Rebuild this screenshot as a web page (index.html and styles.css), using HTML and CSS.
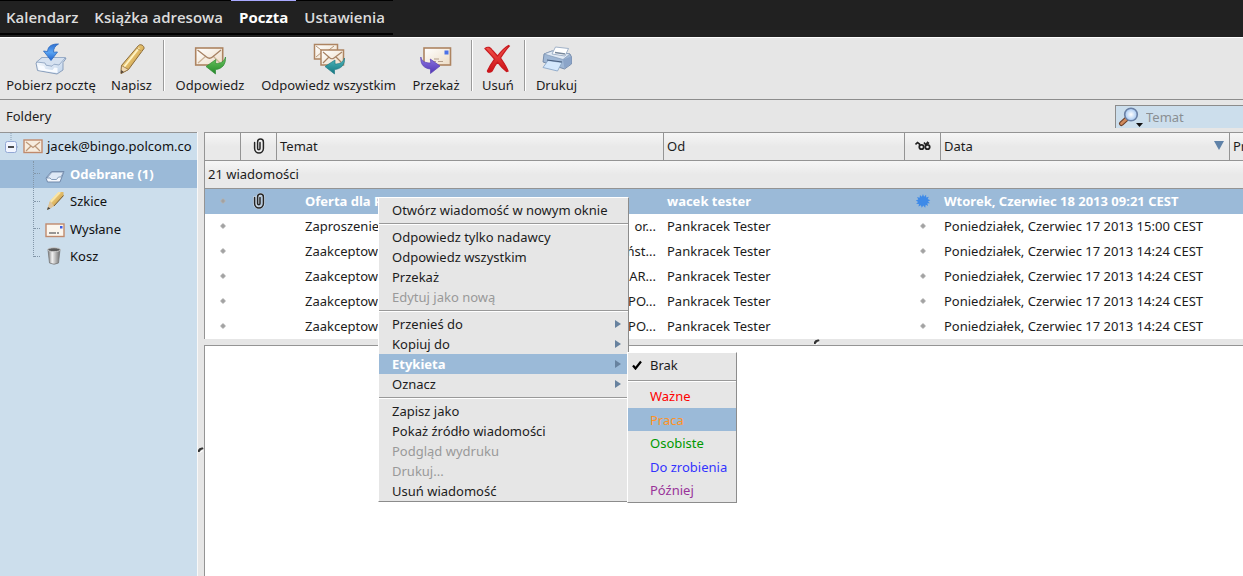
FILE: index.html
```html
<!DOCTYPE html>
<html lang="pl">
<head>
<meta charset="utf-8">
<title>Poczta</title>
<link rel="stylesheet" href="styles.css">
</head>
<body>
<svg class="defs" aria-hidden="true">
  <defs>
    <linearGradient id="gBlue" x1="0" y1="0" x2="0" y2="1"><stop offset="0" stop-color="#2f6fd0"/><stop offset=".5" stop-color="#58a4f4"/><stop offset="1" stop-color="#1f62cc"/></linearGradient>
    <linearGradient id="gTray" x1="0" y1="0" x2="1" y2="1"><stop offset="0" stop-color="#ffffff"/><stop offset="1" stop-color="#b9cfe9"/></linearGradient>
    <linearGradient id="gPencil" x1="0" y1="0" x2="1" y2="1"><stop offset="0" stop-color="#f6e6a6"/><stop offset=".5" stop-color="#e0ba66"/><stop offset="1" stop-color="#a97a33"/></linearGradient>
    <linearGradient id="gPaper" x1="0" y1="0" x2="1" y2="1"><stop offset="0" stop-color="#ffffff"/><stop offset="1" stop-color="#ecdcc6"/></linearGradient>
    <linearGradient id="gGreen" x1="0" y1="0" x2="0" y2="1"><stop offset="0" stop-color="#6cc860"/><stop offset="1" stop-color="#23882a"/></linearGradient>
    <linearGradient id="gTeal" x1="0" y1="0" x2="0" y2="1"><stop offset="0" stop-color="#4fb9bd"/><stop offset="1" stop-color="#147680"/></linearGradient>
    <linearGradient id="gViolet" x1="0" y1="0" x2="0" y2="1"><stop offset="0" stop-color="#8f78e4"/><stop offset="1" stop-color="#5136b4"/></linearGradient>
    <linearGradient id="gRed" x1="0" y1="0" x2="0" y2="1"><stop offset="0" stop-color="#f4554c"/><stop offset="1" stop-color="#cc1016"/></linearGradient>
    <linearGradient id="gBin" x1="0" y1="0" x2="1" y2="0"><stop offset="0" stop-color="#777"/><stop offset=".35" stop-color="#f2f2f2"/><stop offset="1" stop-color="#6c6c6c"/></linearGradient>
    <radialGradient id="gLens"><stop offset="0" stop-color="#ffffff"/><stop offset="1" stop-color="#a5c8f2"/></radialGradient>
    <symbol id="clip" viewBox="0 0 14 18"><path d="M8 5.500v6a1.200 1.200 0 0 1-2.400 0V5a2.900 2.900 0 0 1 5.800 0v6.500a4.400 4.400 0 0 1-8.800 0V5.500" fill="none" stroke="#f4f4f4" stroke-width="2.800" stroke-linecap="round" opacity=".6"/><path d="M8 5.500v6a1.200 1.200 0 0 1-2.400 0V5a2.900 2.900 0 0 1 5.800 0v6.500a4.400 4.400 0 0 1-8.800 0V5.500" fill="none" stroke="#252525" stroke-width="1.500" stroke-linecap="round"/></symbol>
    <symbol id="dot" viewBox="0 0 8 8"><path d="M4 1l3 3-3 3-3-3z" fill="#b4b4b4"/><circle cx="4" cy="4" r="1.700" fill="#a2a2a2"/></symbol>
    <symbol id="arrow" viewBox="0 0 6 10"><path d="M0 1l6 4-6 4z" fill="#67829f"/></symbol>
  </defs>
</svg>

<nav class="tabs">
  <a class="tab" href="#">Kalendarz</a>
  <a class="tab" href="#">Książka adresowa</a>
  <a class="tab tab-active" href="#">Poczta</a>
  <a class="tab" href="#">Ustawienia</a>
</nav>

<div class="toolbar">
  <div class="tool-group">
    <button class="tool tool-fetch" type="button">
      <svg class="tool-icon" viewBox="0 0 32 32"><path d="M1 20l6-5.500 24 1-3 4v7.500l-6 4-19.500-3.500z" fill="url(#gTray)" stroke="#8a9fbc" stroke-width="1"/><path d="M7 14.500h23.500L24 22l-5-.8-2 2-6-1-1-2.200-8.500-1z" fill="#d5e1f0" stroke="#91a6c3" stroke-width=".9"/><path d="M3 22l6 1 1.500 3 7 1 2-2.500 3 .5v5L3.500 27z" fill="#f8fbff"/><path d="M23.500 1C17 .8 13 3 12.500 8.500L8.500 8l7.500 9.500L22.500 9l-4 .2C18.500 5.500 20 3 23.500 1z" fill="url(#gBlue)" stroke="#2c68bd" stroke-width=".8"/></svg>
      <span>Pobierz pocztę</span>
    </button>
    <button class="tool tool-small" type="button">
      <svg class="tool-icon" viewBox="0 0 32 32"><path d="M22.500 2.500c2-2 6 .2 5.500 3L12.500 26.500 5 30.500l.5-8z" fill="url(#gPencil)" stroke="#8b6a38" stroke-width="1"/><path d="M23 5L8 24" stroke="#fff3c4" stroke-width="2"/><path d="M5.500 22.500l7 4L5 30.500z" fill="#efd9b4" stroke="#8b6a38" stroke-width=".7"/><path d="M5.300 27l2.500 2-2.800 1.500z" fill="#4d4038"/><path d="M20.500 5l5.500 3.500" stroke="#c09a56"/></svg>
      <span>Napisz</span>
    </button>
  </div>
  <div class="tool-group">
    <button class="tool tool-reply" type="button">
      <svg class="tool-icon" viewBox="0 0 32 32"><rect x="1.700" y="5" width="27" height="17" fill="url(#gPaper)" stroke="#ad8461" stroke-width="1.600"/><path d="M4 20l8-7M26 20l-7-7" stroke="#cdb397" stroke-width="1.300"/><path d="M3.500 7l9 7q3 2.500 6 0l8.500-7" fill="none" stroke="#a78263" stroke-width="1.300"/><path d="M31.500 14c-1.500 5-5 6.500-10 6.500l.4-4L12 23.500l9.500 7.500v-4.500c6.500-.5 10.500-5 10-12.500z" fill="url(#gGreen)" stroke="#2f8a34" stroke-width=".7"/></svg>
      <span>Odpowiedz</span>
    </button>
    <button class="tool tool-reply-all" type="button">
      <svg class="tool-icon" viewBox="0 0 32 32"><rect x="1.500" y="1.500" width="23" height="14.500" fill="url(#gPaper)" stroke="#ad8461" stroke-width="1.500"/><path d="M3 3l9 7 9-7M3 14l6-5" fill="none" stroke="#b7977a"/><rect x="8" y="7" width="22.500" height="15" fill="url(#gPaper)" stroke="#ad8461" stroke-width="1.500"/><path d="M10 9l7 6q2 1.500 4 0l8-6M10 20l6-6M28 19l-5-5" fill="none" stroke="#a78263" stroke-width="1.200"/><path d="M31.500 15c-1.500 4.500-5 6-9.500 6v-4l-10 6.500 9.500 7.500v-4.500c6-.5 10.500-4 10-11.500z" fill="url(#gTeal)" stroke="#227b86" stroke-width=".7"/></svg>
      <span>Odpowiedz wszystkim</span>
    </button>
    <button class="tool tool-forward" type="button">
      <svg class="tool-icon" viewBox="0 0 32 32"><rect x="4" y="5" width="26.500" height="17" fill="url(#gPaper)" stroke="#ad8461" stroke-width="1.600"/><rect x="24.500" y="7.500" width="4" height="4" fill="#4c72e8"/><path d="M14 16h5M11 18.500h5m2 0h5" stroke="#b49e89" stroke-width="1.200"/><path d="M.8 14c1 4.500 4.500 6 10 6l-.5-4L20 23l-9.500 7.500V26C4.500 25.500.3 22 .8 14z" fill="url(#gViolet)" stroke="#5a40b4" stroke-width=".7"/></svg>
      <span>Przekaż</span>
    </button>
  </div>
  <div class="tool-group">
    <button class="tool" type="button">
      <svg class="tool-icon" viewBox="0 0 32 32"><path d="M3 5.500C6 3 8.500 4.500 10.500 7.500l5 5.500C19 8.500 23 4.500 26.500 2.500l.8.500C23.500 7 21 11 18.500 15c3 4.500 6 8.500 7.500 13l-1.500.5c-4-3-6.500-6-9-9.300-2.500 3-4 6-5.500 9-1.500 1.500-5 1.500-4.500-.5 2-4 4.500-8 7-11.500C9.500 12.500 6 9 3 5.500z" fill="url(#gRed)" stroke="#c81a20" stroke-width="1.200"/></svg>
      <span>Usuń</span>
    </button>
  </div>
  <div class="tool-group">
    <button class="tool tool-small" type="button">
      <svg class="tool-icon" viewBox="0 0 32 32"><path d="M3 11l8-3 18 3 1.500 3v7l-7 5L2 19z" fill="#9fb7d5" stroke="#6f86a6" stroke-width=".9"/><path d="M3 11l8-3 18 3-7 5.500z" fill="#e1eaf5" stroke="#8298b5" stroke-width=".7"/><path d="M11 11l3.500-7 13 1.500L24 13z" fill="#fff" stroke="#8ca1bd" stroke-width=".8"/><path d="M14 9.500l10 1.500" stroke="#76879b" stroke-width="1.500"/><path d="M22 16.500l8.500-3v7l-7 5z" fill="#8ba4c8"/><path d="M7 17.500l14 2-4.500 8.500L2 24.500z" fill="#d4e8fd" stroke="#8ba7c7" stroke-width=".9"/><path d="M6 17l15 2" stroke="#475e7e" stroke-width="1.200"/></svg>
      <span>Drukuj</span>
    </button>
  </div>
</div>

<main class="mail">
  <div class="mail-head">
    <h1 class="title">Foldery</h1>
    <div class="search">
      <svg class="search-icon" viewBox="0 0 26 22"><path d="M9 12.500l-5.500 5" stroke="#6c3f28" stroke-width="5" stroke-linecap="round"/><path d="M8.500 13l-5 4.500" stroke="#d08a5c" stroke-width="2.800" stroke-linecap="round"/><circle cx="13" cy="8.500" r="6.300" fill="url(#gLens)" stroke="#6a80a5" stroke-width="1.600"/><path d="M18 17h7l-3.500 4z" fill="#111"/></svg>
      <input class="search-field" type="text" aria-label="Szukaj" placeholder="Temat">
    </div>
  </div>

  <aside class="folders">
    <ul class="tree">
      <li class="tree-row tree-root">
        <svg class="knob" viewBox="0 0 16 27"><path d="M8 0v8M14 14h4" stroke="#8aa0b6" stroke-dasharray="1 1"/><rect x="2.500" y="8.500" width="11" height="11" rx="2" fill="#f1f5ff" stroke="#93a8d5"/><path d="M5 14h6" stroke="#222" stroke-width="1.600"/></svg>
        <svg class="tree-icon" viewBox="0 0 20 18"><rect x="1" y="3" width="18" height="12.500" fill="#f7eddf" stroke="#c08a6c" stroke-width="1.400"/><path d="M3 5l7 5.500L17 5M3 14l5-5m9 5l-5-5" fill="none" stroke="#bc9879" stroke-width="1.200"/></svg>
        <span>jacek@bingo.polcom.co</span>
      </li>
      <li class="tree-row tree-selected">
        <svg class="tree-icon" viewBox="0 0 20 18"><path d="M1 13l5.500-6.500H19L15 17H2.500z" fill="#f3f7fd" stroke="#7189aa"/><path d="M2 13h3l1.500 1.500h5L13.500 12h2.500l2.500-5H7z" fill="#dfe9f6" stroke="#7c94b3" stroke-width=".9"/></svg>
        <span>Odebrane (1)</span>
      </li>
      <li class="tree-row">
        <svg class="tree-icon" viewBox="0 0 20 18"><path d="M14 0h4.500v4L9 14l-7 4L5 9z" fill="url(#gPencil)"/><path d="M15 0L5.500 10" stroke="#f9e5a6" stroke-width="2.400"/><path d="M5 9l4 5-7 4z" fill="#dfc59c"/><path d="M3 15L5.500 16.500 2 18z" fill="#444"/><path d="M18.500 3.500L9 14" stroke="#76603d"/></svg>
        <span>Szkice</span>
      </li>
      <li class="tree-row">
        <svg class="tree-icon" viewBox="0 0 20 18"><rect x="1" y="4" width="18" height="12.500" fill="#fbf6ee" stroke="#c08a6c" stroke-width="1.400"/><path d="M4 13h7m1 0h2" stroke="#777" stroke-width="1.400"/><rect x="15" y="6" width="2.500" height="2.500" fill="#3c5be0"/></svg>
        <span>Wysłane</span>
      </li>
      <li class="tree-row">
        <svg class="tree-icon" viewBox="0 0 20 18"><path d="M3 2.500L4.500 16q4.500 2.500 9 0L15 2.500z" fill="url(#gBin)" stroke="#777" stroke-width=".8"/><ellipse cx="9" cy="2.700" rx="6.300" ry="2" fill="#5c5c5c" stroke="#c9c9c9"/></svg>
        <span>Kosz</span>
      </li>
    </ul>
  </aside>

  <div class="split-v"><svg class="grip" viewBox="0 0 6 6"><path d="M0 5V3q1-3 5-2.500L5.500 2 3 3 1.500 5z" fill="#333"/><path d="M2 5.500L5 3.500" stroke="#fff"/></svg></div>

  <section class="content">
    <table class="messages">
      <colgroup><col class="c-icon"><col class="c-icon"><col><col class="c-from"><col class="c-icon"><col class="c-date"><col class="c-rest"></colgroup>
      <thead>
        <tr class="head-row">
          <th></th>
          <th class="mid"><svg class="clip"><use href="#clip"/></svg></th>
          <th>Temat</th>
          <th>Od</th>
          <th class="mid"><svg class="glasses" viewBox="0 0 16 10"><path d="M.5 3.500L2.500 1.500 4.500 3 5 6M9 1.500L11 4 12.500 1.500 14 2.500" fill="none" stroke="#222" stroke-width="1.600"/><circle cx="6.500" cy="6" r="2.200" fill="#eee" stroke="#222" stroke-width="1.800"/><circle cx="12.500" cy="6" r="2.200" fill="#eee" stroke="#222" stroke-width="1.800"/></svg></th>
          <th><span class="sorted">Data <svg class="sort" viewBox="0 0 12 9"><path d="M1 0h10L6 9z" fill="#5f82a8"/></svg></span></th>
          <th>Pr</th>
        </tr>
        <tr class="count-row"><th colspan="7">21 wiadomości</th></tr>
      </thead>
      <tbody>
        <tr class="selected">
          <td class="mid"><svg class="dot"><use href="#dot"/></svg></td>
          <td class="mid"><svg class="clip"><use href="#clip"/></svg></td>
          <td><span class="subject">Oferta dla PZFS numer 8</span></td>
          <td>wacek tester</td>
          <td class="mid"><svg class="star" viewBox="0 0 16 16"><path d="M8 0l1.200 3L11.500.8l.2 3.200 3-.8-1.400 2.600L16.300 7l-2.600 1.500 2.300 2-3 .2.700 3.100-2.600-1.400-.6 3.200L8.300 13l-1.700 2.800-1-3-2.800 1.600.6-3.100-3.200-.2L2.400 9-.2 7.300l2.800-1L1.200 3.500l3 .7.300-3.200L6.700 3z" fill="#3e8ae8"/></svg></td>
          <td colspan="2">Wtorek, Czerwiec 18 2013 09:21 CEST</td>
        </tr>
        <tr>
          <td class="mid"><svg class="dot"><use href="#dot"/></svg></td><td></td>
          <td><span class="subject"><span>Zaproszenie</span> <span>or...</span></span></td>
          <td>Pankracek Tester</td>
          <td class="mid"><svg class="dot"><use href="#dot"/></svg></td>
          <td colspan="2">Poniedziałek, Czerwiec 17 2013 15:00 CEST</td>
        </tr>
        <tr>
          <td class="mid"><svg class="dot"><use href="#dot"/></svg></td><td></td>
          <td><span class="subject"><span>Zaakceptowano</span> <span>państ...</span></span></td>
          <td>Pankracek Tester</td>
          <td class="mid"><svg class="dot"><use href="#dot"/></svg></td>
          <td colspan="2">Poniedziałek, Czerwiec 17 2013 14:24 CEST</td>
        </tr>
        <tr>
          <td class="mid"><svg class="dot"><use href="#dot"/></svg></td><td></td>
          <td><span class="subject"><span>Zaakceptowano</span> <span>AR...</span></span></td>
          <td>Pankracek Tester</td>
          <td class="mid"><svg class="dot"><use href="#dot"/></svg></td>
          <td colspan="2">Poniedziałek, Czerwiec 17 2013 14:24 CEST</td>
        </tr>
        <tr>
          <td class="mid"><svg class="dot"><use href="#dot"/></svg></td><td></td>
          <td><span class="subject"><span>Zaakceptowano</span> <span>PO...</span></span></td>
          <td>Pankracek Tester</td>
          <td class="mid"><svg class="dot"><use href="#dot"/></svg></td>
          <td colspan="2">Poniedziałek, Czerwiec 17 2013 14:24 CEST</td>
        </tr>
        <tr>
          <td class="mid"><svg class="dot"><use href="#dot"/></svg></td><td></td>
          <td><span class="subject"><span>Zaakceptowano</span> <span>PO...</span></span></td>
          <td>Pankracek Tester</td>
          <td class="mid"><svg class="dot"><use href="#dot"/></svg></td>
          <td colspan="2">Poniedziałek, Czerwiec 17 2013 14:24 CEST</td>
        </tr>
      </tbody>
    </table>
    <div class="split-h"><svg class="grip" viewBox="0 0 6 6"><path d="M0 5V3q1-3 5-2.500L5.500 2 3 3 1.500 5z" fill="#333"/><path d="M2 5.500L5 3.500" stroke="#fff"/></svg></div>
    <div class="preview"></div>
  </section>
</main>

<div class="menu menu-main">
  <button class="item" type="button">Otwórz wiadomość w nowym oknie</button>
  <hr class="rule">
  <button class="item" type="button">Odpowiedz tylko nadawcy</button>
  <button class="item" type="button">Odpowiedz wszystkim</button>
  <button class="item" type="button">Przekaż</button>
  <button class="item" type="button" disabled>Edytuj jako nową</button>
  <hr class="rule">
  <button class="item" type="button">Przenieś do <svg class="more"><use href="#arrow"/></svg></button>
  <button class="item" type="button">Kopiuj do <svg class="more"><use href="#arrow"/></svg></button>
  <button class="item item-open" type="button">Etykieta <svg class="more"><use href="#arrow"/></svg></button>
  <button class="item" type="button">Oznacz <svg class="more"><use href="#arrow"/></svg></button>
  <hr class="rule">
  <button class="item" type="button">Zapisz jako</button>
  <button class="item" type="button">Pokaż źródło wiadomości</button>
  <button class="item" type="button" disabled>Podgląd wydruku</button>
  <button class="item" type="button" disabled>Drukuj...</button>
  <button class="item" type="button">Usuń wiadomość</button>
</div>

<div class="menu menu-labels">
  <button class="label label-none" type="button"><svg class="check" viewBox="0 0 10 10"><path d="M1 5.500l2.500 3L9 1.500" fill="none" stroke="#000" stroke-width="2.200"/></svg>Brak</button>
  <hr class="rule">
  <button class="label red" type="button">Ważne</button>
  <button class="label orange" type="button">Praca</button>
  <button class="label green" type="button">Osobiste</button>
  <button class="label blue" type="button">Do zrobienia</button>
  <button class="label purple" type="button">Później</button>
</div>
</body>
</html>
```
FILE: styles.css
```css
* { box-sizing: border-box; }

body {
  margin: 0;
  min-height: 100vh;
  display: flex;
  flex-direction: column;
  overflow: hidden;
  position: relative;
  background: #e6e6e6;
  color: #1c1c1c;
  font: 13px/20px "Noto Sans", "Open Sans", sans-serif;
}

button {
  border: 0;
  padding: 0;
  background: none;
  color: inherit;
  font: inherit;
}

svg { display: block; }
.defs { position: absolute; width: 0; height: 0; }

/* Application tabs */
.tabs {
  display: flex;
  height: 37px;
  background: #212121;
}
.tab {
  padding: 5px 8px 0;
  height: 35px;
  border-top: 1px solid #000;
  border-bottom: 2px solid #000;
  color: #dcdcdc;
  font-family: "Open Sans", "Noto Sans", sans-serif;
  font-size: 15px;
  font-weight: 600;
  line-height: 22px;
  text-decoration: none;
}
.tab:first-child { padding-left: 6px; }
.tab-active {
  border-top-color: #a9a9ff;
  color: #fff;
  font-weight: 700;
}

/* Toolbar */
.toolbar {
  display: flex;
  height: 63px;
  padding-top: 2px;
  border-top: 1px solid #fff;
  border-bottom: 1px solid #8c8c8c;
}
.tool-group {
  display: flex;
  gap: 12px;
  height: 51px;
  padding: 0 10px;
  border-right: 1px solid #9a9a9a;
  box-shadow: 1px 0 #fff;
}
.tool-group:first-child { padding-left: 4px; }
.tool-group:last-child { border: 0; box-shadow: none; }
.tool {
  display: flex;
  flex-direction: column;
  align-items: center;
  gap: 0;
  padding-top: 3px;
}
.tool-icon { flex: none; width: 32px; height: 32px; }
.tool-small { min-width: 43px; }
.tool-fetch { min-width: 94px; }
.tool-reply { min-width: 72px; }
.tool-reply-all { min-width: 141px; }
.tool-forward { min-width: 50px; }

/* Mail area */
.mail {
  flex: 1;
  display: grid;
  grid-template-columns: 197px 7px minmax(0, 1fr);
  grid-template-rows: 32px minmax(0, 1fr);
}
.mail-head {
  grid-column: 1 / -1;
  display: flex;
  justify-content: space-between;
  align-items: center;
}
.title {
  margin: 0;
  padding-left: 6px;
  font-size: 13px;
  font-weight: 400;
}
.search {
  display: flex;
  align-items: center;
  width: 128px;
  height: 23px;
  padding-left: 2px;
  border-top: 1px solid #8c8c8c;
  border-left: 1px solid #8c8c8c;
  background: #ccdeec;
  overflow: hidden;
}
.search-icon { flex: none; width: 26px; height: 22px; }
.search-field {
  flex: 1;
  min-width: 0;
  padding: 0 0 0 2px;
  border: 0;
  outline: 0;
  background: none;
  font: inherit;
}
.search-field::placeholder { color: #8a8f93; opacity: 1; }

/* Folder tree */
.folders {
  border-top: 1px solid #949494;
  background: #ccdeec;
  overflow: hidden;
}
.tree {
  position: relative;
  margin: 0;
  padding: 0;
  list-style: none;
}
.tree::before {
  content: "";
  position: absolute;
  top: 28px;
  left: 33px;
  height: 96px;
  border-left: 1px dotted #8296a8;
}
.tree-row {
  display: flex;
  align-items: center;
  gap: 5px;
  height: 27px;
  padding-left: 34px;
  padding-bottom: 1px;
  color: #111;
  white-space: nowrap;
}
.tree-row:nth-child(even) { height: 28px; }
.tree-row::before {
  content: "";
  width: 6px;
  border-top: 1px dotted #8296a8;
}
.tree-root { padding-left: 3px; gap: 4px; }
.tree-root::before { content: none; }
.tree-selected {
  background: #9bbad8;
  color: #fff;
  font-weight: 700;
}
.knob { flex: none; width: 16px; height: 27px; }
.tree-icon { flex: none; width: 20px; height: 18px; }

/* Splitters */
.split-v {
  display: flex;
  align-items: center;
  border-left: 1px solid #f8f8f8;
  padding-top: 192px;
}
.split-h {
  display: flex;
  flex: none;
  justify-content: center;
  align-items: center;
  height: 6px;
  padding-left: 186px;
  background: #e6e6e6;
}
.grip { width: 6px; height: 6px; }

/* Message list */
.content {
  display: flex;
  flex-direction: column;
}
.messages {
  width: 100%;
  table-layout: fixed;
  border-collapse: separate;
  border-spacing: 0;
  border-top: 1px solid #949494;
  border-left: 1px solid #949494;
  background: #fff;
}
.c-icon { width: 36px; }
.c-from { width: 241px; }
.c-date { width: 289px; }
.c-rest { width: 13px; }
.messages th,
.messages td {
  padding: 0 0 2px 3px;
  overflow: hidden;
  text-align: left;
  white-space: nowrap;
}
.messages th {
  height: 28px;
  border-bottom: 1px solid #949494;
  background: linear-gradient(#f6f6f6, #e9e9e9 50%);
  font-weight: 400;
}
.head-row th:not(:last-child) { border-right: 1px solid #949494; }
.messages td { height: 25px; }
.messages .mid { padding: 0 0 2px; }
.mid svg { margin: 0 auto; }
.selected td {
  background: #9bbad8;
  color: #fff;
  font-weight: 700;
}
.subject {
  display: flex;
  justify-content: space-between;
  padding: 0 8px 0 25px;
}
.sorted {
  display: flex;
  justify-content: space-between;
  align-items: center;
  padding-right: 4px;
}
.sort { width: 12px; height: 9px; }
.clip { width: 14px; height: 18px; }
.dot { width: 8px; height: 8px; }
.glasses { width: 16px; height: 10px; }
.star { width: 14px; height: 16px; overflow: visible; }

.preview {
  flex: 1;
  border-top: 1px solid #949494;
  border-left: 1px solid #949494;
  background: #fff;
}

/* Context menus */
.menu {
  position: absolute;
  display: flex;
  flex-direction: column;
  border: 1px solid #8c8c8c;
  border-top-color: #fff;
  border-left-color: #fff;
  background: #e6e6e6;
}
.menu-main {
  top: 197px;
  left: 378px;
  width: 251px;
  padding-top: 2px;
}
.menu-labels {
  top: 352px;
  left: 627px;
  width: 110px;
}
.item {
  display: flex;
  align-items: center;
  justify-content: space-between;
  height: 20px;
  padding: 0 7px 0 13px;
  white-space: nowrap;
}
.item:disabled { color: #999; }
.item-open {
  background: #9bbad8;
  color: #fff;
  font-weight: 700;
}
.more { width: 6px; height: 10px; }
.rule {
  width: 100%;
  margin: 3px 0 2px;
  border: 0;
  border-top: 1px solid #999;
  border-bottom: 1px solid #fff;
}
.label {
  display: flex;
  align-items: center;
  height: 23px;
  padding-left: 22px;
  white-space: nowrap;
}
.label:nth-child(odd) { height: 24px; }
.label-none.label { gap: 8px; padding-left: 4px; }
.check { width: 10px; height: 10px; }
.red { color: #f00; }
.orange { background: #9bbad8; color: #ff9326; }
.green { color: #009900; }
.blue { color: #3333ff; }
.purple { color: #993399; }
```
